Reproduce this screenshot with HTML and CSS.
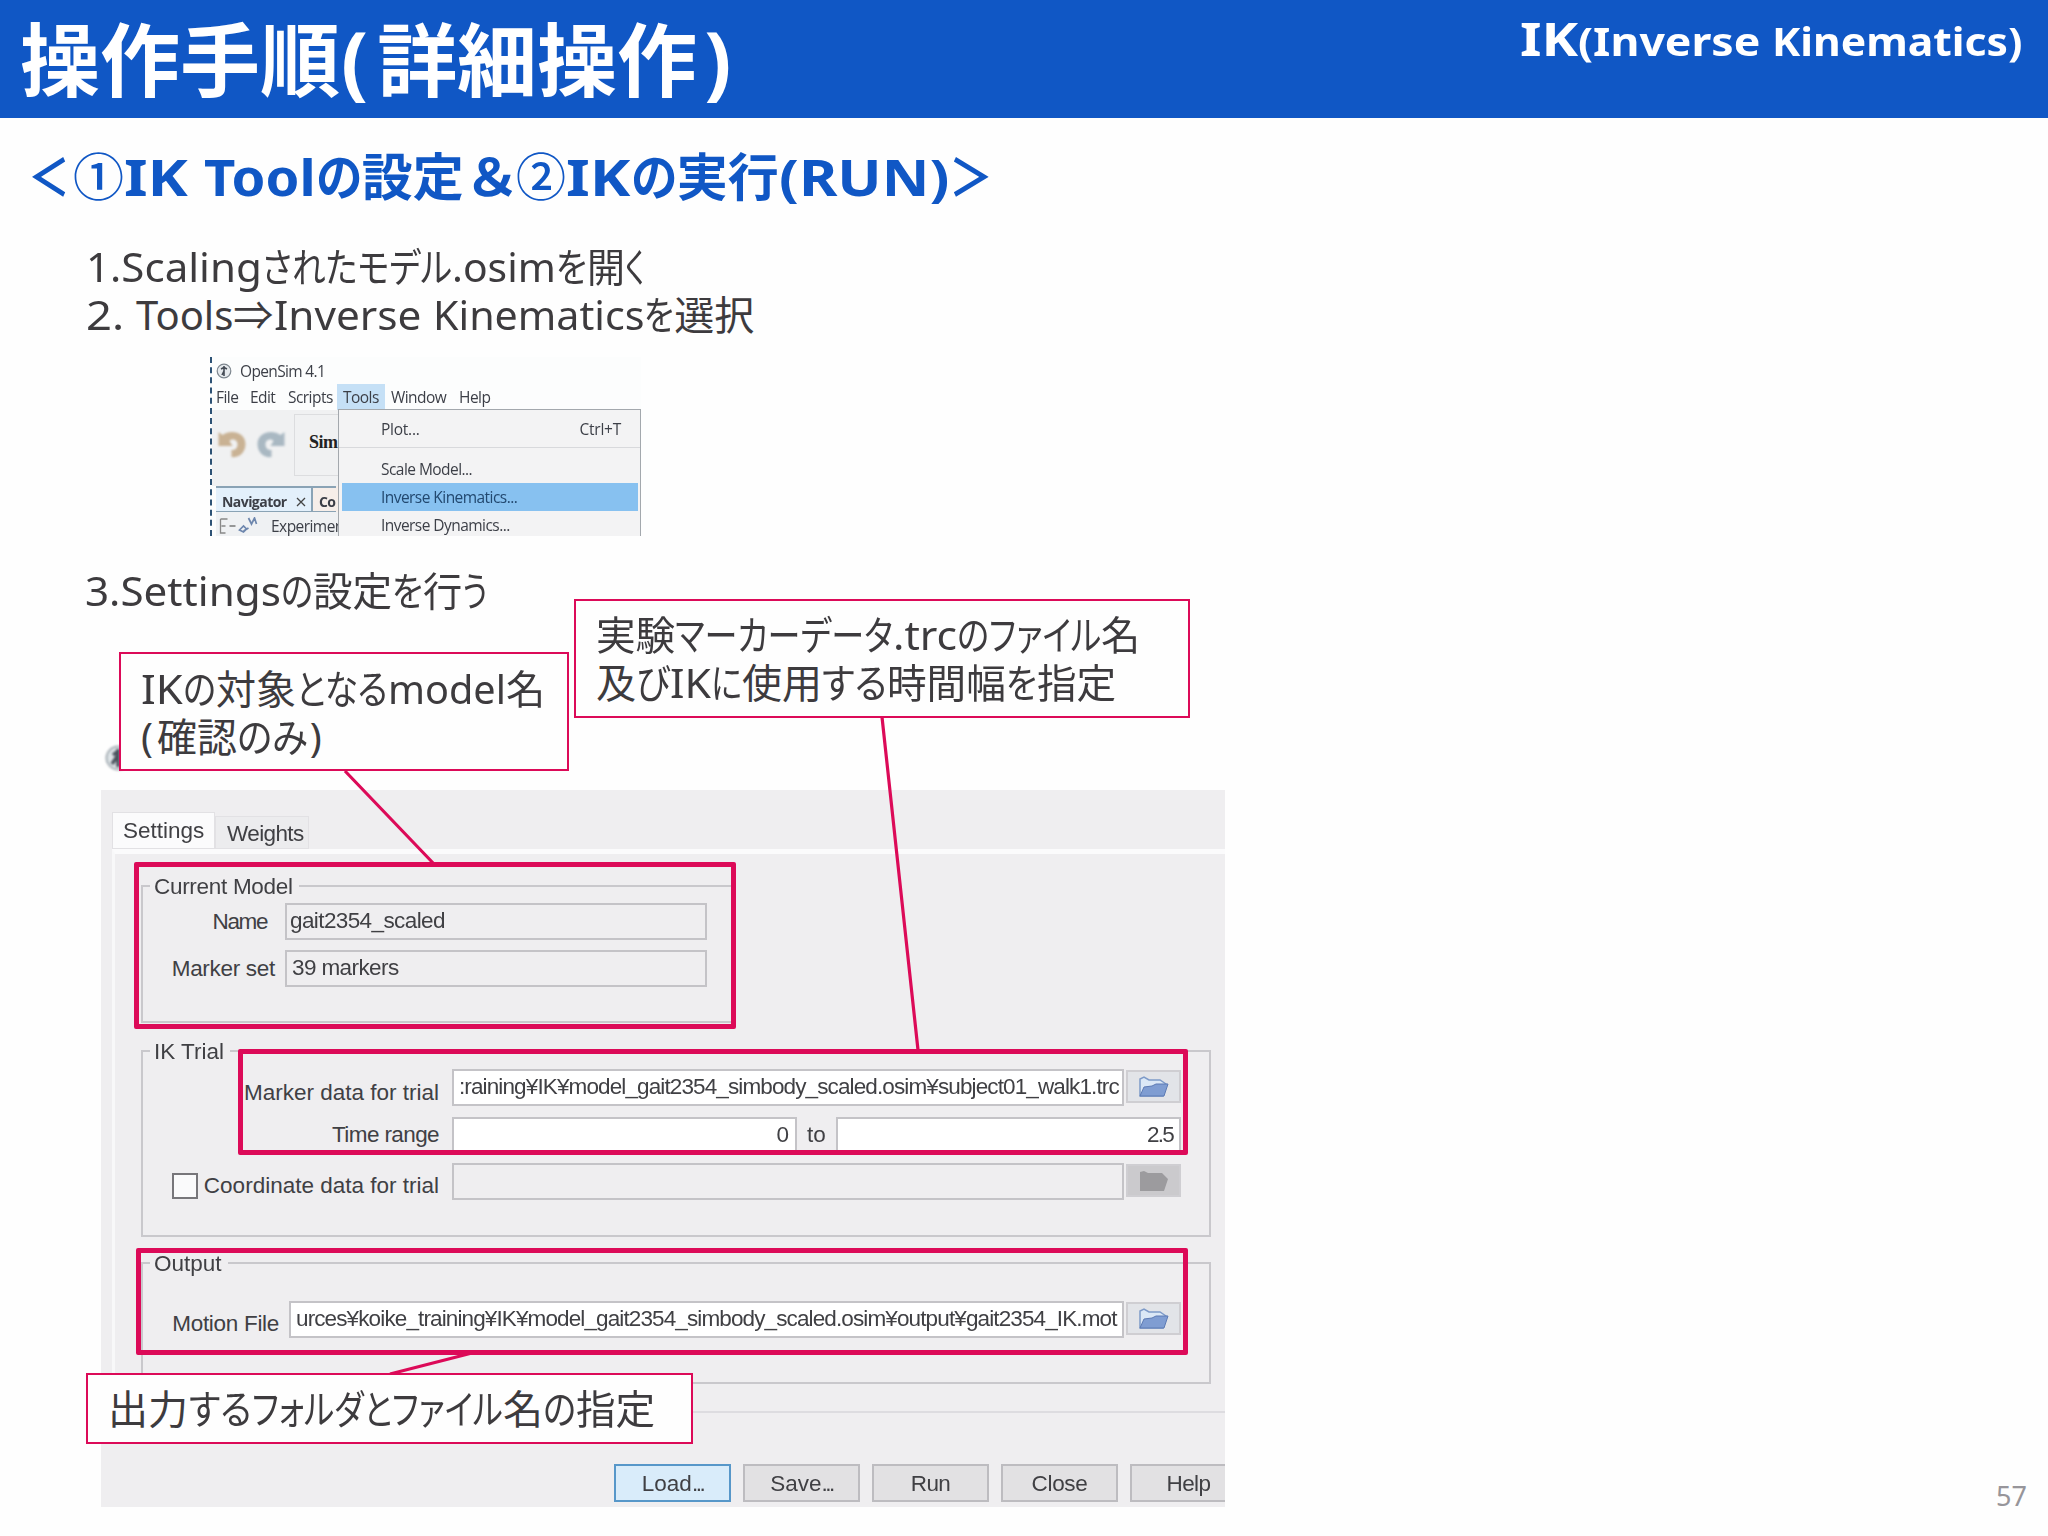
FILE: index.html
```html
<!DOCTYPE html>
<html lang="ja">
<head>
<meta charset="utf-8">
<title>操作手順(詳細操作)</title>
<link rel="stylesheet" href="styles.css">
</head>
<body>
<main class="slide">
  <header class="banner">
    <h1 class="title">操作手順<span class="paren">(</span>詳細操作<span class="paren">)</span></h1>
    <p class="topic"><b>IK</b><b>(Inverse </b><b>Kinematics)</b></p>
  </header>

  <h2 class="subtitle"><b>＜</b><b>①</b><b>IK </b><b>Tool</b><b>の</b><b>設定</b><b>＆</b><b>②</b><b>IK</b><b>の</b><b>実行</b><b>(RUN)</b><b>＞</b></h2>

  <div class="steps">
    <p class="step-open"><b>1.Scaling</b><b>されたモデル</b><b>.osim</b><b>を</b><b>開</b><b>く</b></p>
    <p class="step-tools"><b>2. </b><b>Tools</b><b>⇒</b><b>Inverse </b><b>Kinematics</b><b>を</b><b>選択</b></p>
  </div>

  <section class="app">
    <div class="app-title">
      <svg class="app-icon" viewBox="0 0 16 16"><circle cx="8" cy="8" r="6.8" fill="#e6eaed" stroke="#7d868e" stroke-width="1.2"/><path d="M8 3v10M5 6l3-1.500 3 1.500M8 8l-2 4" stroke="#454c55" stroke-width="1.6" fill="none"/></svg>
      <span>OpenSim 4.1</span>
    </div>
    <nav class="app-menu">
      <span class="mi m-file"><span>File</span></span><span class="mi m-edit"><span>Edit</span></span><span class="mi m-scripts"><span>Scripts</span></span><span class="mi m-tools"><span>Tools</span></span><span class="mi m-window"><span>Window</span></span><span class="mi"><span>Help</span></span>
    </nav>
    <div class="toolbar">
      <svg class="arrow" viewBox="0 0 28 30"><path d="M0 3l4 3C12 0 27 3 27 15c0 9-7 14-14 13v-7c4 0 6-2 6-6 0-4-5-6-8-3l3 5H0z" fill="#c9b294"/></svg>
      <svg class="arrow" viewBox="0 0 28 30"><path d="M28 3l-4 3C16 0 1 3 1 15c0 9 7 14 14 13v-7c-4 0-6-2-6-6 0-4 5-6 8-3l-3 5h14z" fill="#a9b8c2"/></svg>
      <div class="sim-box"><span>Sim</span></div>
    </div>
    <div class="panes">
      <span class="pane-tab active"><span>Navigator</span><svg class="x" viewBox="0 0 10 10"><path d="M1 1l8 8M9 1l-8 8" stroke="#444" stroke-width="1.3"/></svg></span><span class="pane-tab"><span>Co</span></span>
    </div>
    <div class="tree">
      <svg class="tree-icon" viewBox="0 0 44 18"><path d="M3 2h7M3 2v14h5M4 9h4" stroke="#888" fill="none" stroke-width="1.3"/><path d="M12 9h6" stroke="#777" stroke-width="1.5"/><path d="M22 13l4-4 3 3-3 3zM31 1l3 6 3-6 2 6M26 14l5-3" stroke="#6d86ad" stroke-width="1.7" fill="none"/></svg>
      <span>Experimen</span>
    </div>
    <div class="dropdown">
      <div class="dd plot"><span>Plot...</span><span>Ctrl+T</span></div>
      <div class="dd"><span>Scale Model...</span></div>
      <div class="dd inverse"><span>Inverse Kinematics...</span></div>
      <div class="dd"><span>Inverse Dynamics...</span></div>
    </div>
  </section>

  <div class="steps step3"><p class="step-settings"><b>3.Settings</b><b>の</b><b>設定</b><b>を</b><b>行</b><b>う</b></p></div>

  <div class="dialog-title">
    <svg class="dialog-icon" viewBox="0 0 28 28"><circle cx="14" cy="14" r="11.5" fill="#dfe5e8" stroke="#a9b2b8" stroke-width="2"/><path d="M14 5v18M9 11l5-4M8 20l6-9" stroke="#4a525d" stroke-width="3.5" fill="none"/></svg>
  </div>
  <section class="dialog">
    <div class="tabs">
      <span class="tab on"><span>Settings</span></span><span class="tab"><span class="tight">Weights</span></span>
    </div>
    <div class="panel">
      <div class="group model">
        <span class="legend"><span class="snug">Current Model</span></span>
        <div class="row r-name"><label><span class="squeezed">Name</span></label><span class="field ro"><span class="tight">gait2354_scaled</span></span></div>
        <div class="row r-set"><label><span class="snug">Marker set</span></label><span class="field ro"><span class="tight">39 markers</span></span></div>
      </div>
      <div class="group trial">
        <span class="legend"><span>IK Trial</span></span>
        <div class="row r-marker"><label><span>Marker data for trial</span></label><span class="field"><span class="path">:raining¥IK¥model_gait2354_simbody_scaled.osim¥subject01_walk1.trc</span></span><span class="browse"><svg viewBox="0 0 30 22"><path d="M1 20V3l4-2 5 3h11l6 4-3 12z" fill="#dbe8f6" stroke="#7d9ac8" stroke-width="1.5"/><path d="M1 20l4-9 8-1 4-2h12l-4 12z" fill="#7f9dd2" stroke="#5c7ab4"/></svg></span></div>
        <div class="row r-time"><label><span class="tight">Time range</span></label><span class="field num"><span>0</span></span><span class="to"><span>to</span></span><span class="field num"><span class="dec">2.5</span></span></div>
        <div class="row r-coord"><label><i class="check"></i><span>Coordinate data for trial</span></label><span class="field ro"></span><span class="browse off"><svg viewBox="0 0 30 22"><path d="M1 21V2l4-1 4 2h14l6 6-4 12z" fill="#9c9b9e"/></svg></span></div>
      </div>
      <div class="group output">
        <span class="legend"><span>Output</span></span>
        <div class="row r-motion"><label><span class="snug">Motion File</span></label><span class="field"><span class="path">urces¥koike_training¥IK¥model_gait2354_simbody_scaled.osim¥output¥gait2354_IK.mot</span></span><span class="browse"><svg viewBox="0 0 30 22"><path d="M1 20V3l4-2 5 3h11l6 4-3 12z" fill="#dbe8f6" stroke="#7d9ac8" stroke-width="1.5"/><path d="M1 20l4-9 8-1 4-2h12l-4 12z" fill="#7f9dd2" stroke="#5c7ab4"/></svg></span></div>
      </div>
    </div>
    <footer class="buttons">
      <span class="btn primary"><span>Load<i class="dots">...</i></span></span><span class="btn"><span>Save<i class="dots">...</i></span></span><span class="btn"><span class="tight">Run</span></span><span class="btn"><span class="snug">Close</span></span><span class="btn"><span class="tight">Help</span></span>
    </footer>
  </section>

  <svg class="connectors" viewBox="0 0 2048 1536">
    <path d="M345 771L434 864M882 717L918 1050M390 1374L472 1353"/>
  </svg>
  <div class="mark mark-model"></div>
  <div class="mark mark-trial"></div>
  <div class="mark mark-output"></div>
  <div class="callout c-model"><p class="note-model"><b>IK</b><b>の</b><b>対象</b><b>となる</b><b>model</b><b>名</b></p><p class="note-check"><b>(</b><b>確認</b><b>のみ</b><b>)</b></p></div>
  <div class="callout c-trial"><p class="note-marker"><b>実験</b><b>マーカーデータ</b><b>.trc</b><b>の</b><b>ファイル</b><b>名</b></p><p class="note-time"><b>及</b><b>び</b><b>IK</b><b>に</b><b>使用</b><b>する</b><b>時間幅</b><b>を</b><b>指定</b></p></div>
  <div class="callout c-output"><p class="note-output"><b>出力</b><b>する</b><b>フォルダと</b><b>ファイル</b><b>名</b><b>の</b><b>指定</b></p></div>
  <span class="page">57</span>
</main>
</body>
</html>
```
FILE: styles.css
```css
* { box-sizing: border-box; }
body { margin: 0; background: #fefefe; }
p, h1, h2 { margin: 0; }
.slide {
  position: relative;
  width: 2048px;
  height: 1536px;
  overflow: hidden;
  display: flex;
  flex-direction: column;
  align-items: flex-start;
  color: #3d3b3e;
  font-family: "Noto Sans", "Noto Sans CJK JP", sans-serif;
  font-feature-settings: "palt";
  white-space: nowrap;
}
.slide span { white-space: pre; }

/* Runs of one script: --s is the horizontal scale, --m the width it adds or takes */
b {
  display: inline-block;
  font-weight: inherit;
  white-space: pre;
  transform: scaleX(var(--s, 1));
  transform-origin: 0 50%;
  margin-right: var(--m, 0);
}

.banner {
  width: 2048px;
  height: 118px;
  padding: 0 26px 0 20px;
  display: flex;
  justify-content: space-between;
  background: #1057c5;
  color: #fff;
}
.title { font-size: 80px; line-height: 118px; font-weight: 700; font-feature-settings: normal; }
.paren { padding: 0 9px 0 1px; }
.paren:last-child { padding: 0 0 0 7px; }
.topic { font-size: 40px; line-height: 76px; font-weight: 700; }
.topic b:nth-child(1) { font-size: 46px; --s: 1.2; --m: 9.6px; }
.topic b:nth-child(2) { --s: 1.114; --m: 19.8px; }
.topic b:nth-child(3) { --s: 1.066; --m: 15.4px; }

.subtitle { margin: 26px 0 0 28px; height: 64px; font-size: 51px; line-height: 64px; font-weight: 700; color: #1057c5; }
.subtitle b:nth-child(1) { --s: .82; --m: -6px; }
.subtitle b:nth-child(2), .subtitle b:nth-child(8) { font-weight: 500; }
.subtitle b:nth-child(3) { --s: 1.19; --m: 13px; }
.subtitle b:nth-child(4) { --s: 1.065; --m: 7px; }
.subtitle b:nth-child(5), .subtitle b:nth-child(10) { --s: .915; --m: -4.3px; }
.subtitle b:nth-child(6) { --m: 5px; }
.subtitle b:nth-child(7) { --s: 1.1; --m: 5.2px; }
.subtitle b:nth-child(8) { --s: .98; --m: -1px; }
.subtitle b:nth-child(9) { --s: 1.2; --m: 11.2px; }
.subtitle b:nth-child(12) { --s: 1.15; --m: 22.5px; }
.subtitle b:nth-child(13) { --s: .86; --m: -7px; }

.steps { margin: 35px 0 0 86px; font-size: 40px; line-height: 48px; }
.steps p { height: 48px; }
.step3 { margin: 31px 0 0 85px; }
.step-open b:nth-child(1) { --s: 1.052; --m: 9px; }
.step-open b:nth-child(2) { --s: .838; --m: -36.6px; }
.step-open b:nth-child(3) { --s: 1.02; --m: 2px; }
.step-open b:nth-child(4) { --s: .84; --m: -5.9px; }
.step-open b:nth-child(5) { --s: .95; --m: -2px; }
.step-open b:nth-child(6) { --s: .727; --m: -7.5px; }
.step-tools b:nth-child(1) { --s: 1.136; --m: 6px; }
.step-tools b:nth-child(3) { --m: 1px; }
.step-tools b:nth-child(4) { --s: 1.058; --m: 8.8px; }
.step-tools b:nth-child(5) { --s: 1.03; --m: 6px; }
.step-tools b:nth-child(6) { --s: .81; --m: -6.9px; }
.step-settings b:nth-child(1) { --s: 1.054; --m: 10px; }
.step-settings b:nth-child(2) { --s: .83; --m: -6.6px; }
.step-settings b:nth-child(3) { --s: .99; --m: -1px; }
.step-settings b:nth-child(4) { --s: .84; --m: -5.9px; }
.step-settings b:nth-child(5) { --s: .98; --m: -1px; }
.step-settings b:nth-child(6) { --s: .77; --m: -8.3px; }

/* Application window with the open Tools menu */
.app {
  position: relative;
  width: 431px;
  height: 179px;
  margin: 18px 0 0 210px;
  padding-left: 4px;
  overflow: hidden;
  background: #fcfdfd;
  border-left: 2px dashed #2d5275;
  color: #3c3f47;
  font: 15.5px/20px "Open Sans", sans-serif;
  letter-spacing: -.55px;
}
.app-title { height: 27px; display: flex; align-items: center; gap: 8px; letter-spacing: -.65px; }
.app-icon { width: 16px; height: 16px; }
.app-menu { height: 26px; display: flex; line-height: 27px; }
.m-file { width: 34px; }
.m-edit { width: 38px; }
.m-scripts { width: 49px; }
.m-tools { width: 48px; padding-left: 6px; background: #c5e0f6; }
.m-window { width: 74px; padding-left: 6px; }
.toolbar { height: 76px; margin-left: -4px; padding: 4px 0 0 6px; display: flex; gap: 9px; background: #f0f1f2; }
.arrow { width: 29px; height: 30px; margin-top: 15px; filter: blur(0.8px); }
.sim-box { height: 62px; flex: 1; padding: 16px 0 0 14px; border: 1px solid #dcdddf; font: bold 18px/22px "Liberation Serif", serif; color: #222; }
.panes { height: 26px; display: flex; font-weight: 700; font-size: 14px; line-height: 27px; background: #f6eee9; }
.pane-tab { height: 26px; padding-left: 6px; border-top: 2px solid #8aa3b5; border-bottom: 1px solid #8aa3b5; }
.pane-tab.active { width: 97px; background: #e3f0fb; border-right: 2px solid #8aa3b5; }
.x { width: 10px; height: 10px; margin-left: 9px; }
.tree { height: 24px; padding-top: 4px; display: flex; align-items: center; gap: 8px; background: #eff1f3; }
.tree-icon { width: 47px; height: 18px; filter: blur(0.5px); }
.dropdown {
  position: absolute;
  left: 126px;
  top: 52px;
  width: 303px;
  height: 140px;
  border: 1px solid #a3a8ad;
  background: #f3f3f4;
}
.dd { padding: 0 0 0 42px; line-height: 28px; height: 28px; }
.plot { height: 38px; line-height: 38px; margin-bottom: 7px; display: flex; justify-content: space-between; padding-right: 19px; border-bottom: 1px solid #d8d9dc; letter-spacing: -.25px; }
.inverse { margin: 0 2px 0 3px; padding-left: 39px; background: #87c1f0; color: #22486f; }

/* Inverse Kinematics tool dialog */
.dialog-title { height: 46px; width: 200px; margin: 129px 0 0 104px; }
.dialog-icon { width: 28px; height: 28px; filter: blur(1px); }
.dialog {
  width: 1124px;
  height: 717px;
  margin-left: 101px;
  overflow: hidden;
  background: #efeef0;
  color: #404044;
  font: 22.5px/30px "Liberation Sans", sans-serif;
  font-feature-settings: normal;
}
.snug { letter-spacing: -.3px; }
.tight { letter-spacing: -.6px; }
.squeezed { letter-spacing: -1.4px; }
.path { letter-spacing: -.88px; }
.dec { letter-spacing: -1.8px; }
.dialog span span, .app span span, .app-title span, .dd span, .tree span, .browse svg { filter: blur(0.6px); }
.tabs { height: 59px; padding: 0 0 0 11px; display: flex; align-items: flex-end; }
.tab { height: 33px; width: 94px; padding-left: 11px; line-height: 34px; background: #ececee; border: 1px solid #e2e1e4; }
.tab.on { width: 103px; height: 37px; padding-left: 10px; background: #fbfbfc; line-height: 36px; }
.panel { height: 564px; margin-left: 11px; padding: 31px 0 0 28px; border-top: 5px solid #fbfbfc; border-left: 3px solid #f8f8f9; border-bottom: 2px solid #dddce0; background: #efeef0; }
.group { width: 1070px; margin-left: -2px; border: 2px solid #c9c8cc; }
.legend { display: block; width: max-content; height: 30px; margin: -15px 0 0 7px; padding: 0 6px 0 4px; background: #efeef0; }
.model { height: 138px; width: 592px; border-right: none; }
.trial { height: 187px; margin-top: 27px; }
.output { height: 122px; margin-top: 25px; }
.row { display: flex; }
.row label { display: flex; justify-content: flex-end; align-items: center; }
.field { height: 37px; padding: 0 5px; border: 2px solid #c4c3c7; background: #fff; line-height: 32px; }
.field.ro { background: #efeef0; }
.browse { width: 55px; height: 33px; margin: 1px 0 0 2px; border: 2px solid #cfced2; background: #e2e4e8; display: flex; align-items: center; justify-content: center; }
.browse svg { width: 30px; height: 22px; }
.browse.off { background: #cbcacd; }
.r-name { margin-top: 1px; }
.r-name label { width: 124px; }
.r-name .field { width: 422px; margin-left: 18px; padding-left: 3px; }
.r-set { margin-top: 10px; }
.r-set label { width: 132px; }
.r-set .field { width: 422px; margin-left: 10px; }
.r-marker { margin-top: 2px; }
.r-marker label, .r-time label, .r-coord label { width: 296px; margin-right: 13px; }
.r-marker label { padding-top: 9px; }
.r-marker .field, .r-coord .field { width: 672px; }
.r-time { margin-top: 9px; }
.r-time .num { width: 345px; height: 36px; display: flex; justify-content: flex-end; padding: 0 6px; }
.to { width: 39px; text-align: center; line-height: 36px; }
.r-coord { margin-top: 10px; }
.r-coord label { padding-top: 8px; }
.check { width: 26px; height: 26px; margin-right: 6px; border: 2px solid #77767a; background: #fafafb; }
.r-motion { margin-top: 22px; }
.r-motion label { width: 136px; margin-right: 10px; padding-top: 8px; }
.r-motion .field { width: 835px; }
.buttons { height: 94px; padding: 51px 0 0 513px; display: flex; gap: 12px; }
.btn { flex: none; width: 117px; height: 38px; border: 2px solid #bdbcc0; background: #e2e1e3; line-height: 36px; text-align: center; }
.btn.primary { background: #d9ecfa; border-color: #5797c9; }
.dots { font-style: normal; letter-spacing: -2.5px; }

/* Annotations */
.connectors { position: absolute; left: 0; top: 0; width: 2048px; height: 1536px; fill: none; stroke: #dc0a58; stroke-width: 3.2; }
.mark { position: absolute; border: 5px solid #dc0a58; border-radius: 2px; }
.mark-model { left: 134px; top: 862px; width: 602px; height: 167px; }
.mark-trial { left: 238px; top: 1049px; width: 950px; height: 106px; }
.mark-output { left: 136px; top: 1248px; width: 1052px; height: 107px; }
.callout { position: absolute; border: 2px solid #dc0a58; background: #fefefe; font-size: 40px; line-height: 48px; padding: 11px 0 0 20px; }
.callout p { height: 48px; }
.c-model { left: 119px; top: 652px; width: 450px; height: 119px; }
.c-trial { left: 574px; top: 599px; width: 616px; height: 119px; padding-top: 10px; }
.c-output { left: 86px; top: 1373px; width: 607px; height: 71px; padding-top: 10px; }
.note-model b:nth-child(1) { --s: 1.09; --m: 3.6px; }
.note-model b:nth-child(2) { --s: .855; --m: -5.6px; }
.note-model b:nth-child(4) { --s: .84; --m: -17.5px; }
.note-model b:nth-child(5) { --s: .99; --m: -1px; }
.note-model b:nth-child(6) { --s: .98; }
.note-check b:nth-child(1) { --m: 4px; }
.note-check b:nth-child(3) { --s: .91; --m: -7px; }
.note-check b:nth-child(4) { margin-left: 2px; }
.note-marker b:nth-child(1) { --s: .99; --m: -1px; }
.note-marker b:nth-child(2) { --s: .827; --m: -45.5px; }
.note-marker b:nth-child(3) { --s: 1.067; --m: 4px; }
.note-marker b:nth-child(4) { --s: .83; --m: -6.6px; }
.note-marker b:nth-child(5) { --s: .81; --m: -26.4px; }
.note-marker b:nth-child(6) { --s: .98; }
.note-time b:nth-child(2) { --s: .88; --m: -4.6px; }
.note-time b:nth-child(3) { --s: 1.07; --m: 2.6px; }
.note-time b:nth-child(4) { --s: .805; --m: -7.5px; }
.note-time b:nth-child(6) { --s: .903; --m: -7px; }
.note-time b:nth-child(7) { --s: .99; --m: -1px; }
.note-time b:nth-child(8) { --s: .84; --m: -5.9px; }
.note-time b:nth-child(9) { --s: .99; }
.note-output b:nth-child(1) { --m: 1px; }
.note-output b:nth-child(2) { --s: .87; --m: -9px; }
.note-output b:nth-child(3) { --s: .805; --m: -34px; }
.note-output b:nth-child(4) { --s: .8; --m: -27.6px; }
.note-output b:nth-child(6) { --s: .855; --m: -5.6px; }
.note-output b:nth-child(7) { --s: .99; }
.page { position: absolute; left: 1996px; top: 1476px; font-size: 27px; line-height: 40px; color: #97959a; }
```
